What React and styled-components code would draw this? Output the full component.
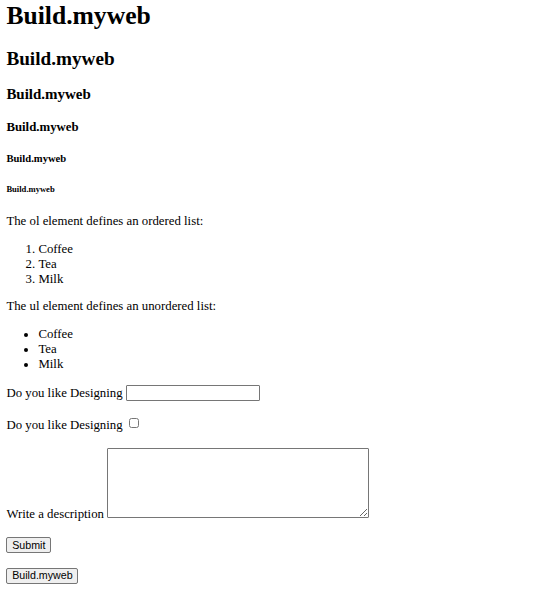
import React from "react";
import styled, { createGlobalStyle } from "styled-components";

const GlobalStyle = createGlobalStyle`
  body {
    margin: 0 6.4px 6.4px;
    padding-top: 1px;
    font-family: "Liberation Serif", "Times New Roman", serif;
    font-size: 12.8px;
    color: #000;
    background: #fff;
  }
`;

const H1 = styled.h1`
  font-size: 25.6px;
  margin: 0 0 0.67em;
`;

const H2 = styled.h2`
  font-size: 19.2px;
  margin: 0.83em 0;
`;

const H3 = styled.h3`
  font-size: 14.976px;
  margin: 1em 0;
`;

const H4 = styled.h4`
  font-size: 12.8px;
  margin: 1.33em 0;
`;

const H5 = styled.h5`
  font-size: 10.624px;
  margin: 1.67em 0;
`;

const H6 = styled.h6`
  font-size: 8.576px;
  margin: 2.33em 0;
`;

const Text = styled.p`
  margin: 12.8px 0;
`;

const OrderedList = styled.ol`
  margin: 12.8px 0;
  padding-left: 32px;
`;

const BulletList = styled.ul`
  margin: 12.8px 0;
  padding-left: 32px;
`;

const Form = styled.form`
  margin: 0;
`;

const Row = styled.div`
  margin-bottom: ${(p) => (p.$extra ? "15.72px" : "14.72px")};
`;

const TextInput = styled.input`
  box-sizing: border-box;
  width: 134px;
  height: 16px;
  padding: 0.8px 1.6px;
  border: 1px solid #767676;
  border-radius: 1px;
  font-family: "Liberation Sans", Arial, sans-serif;
  font-size: 10.67px;
  margin: 0;
`;

const Check = styled.input`
  width: 10.4px;
  height: 10.4px;
  margin: 2.4px 2.4px 2.4px 3.2px;
`;

const Area = styled.textarea`
  box-sizing: border-box;
  width: 262px;
  height: 70px;
  padding: 1.6px;
  border: 1px solid #767676;
  border-radius: 1px;
  font-family: "Liberation Mono", monospace;
  font-size: 10.67px;
  margin: 0;
`;

const Button = styled.button`
  font-family: "Liberation Sans", Arial, sans-serif;
  font-size: 10.67px;
  height: 16px;
  padding: 0 4.8px;
  margin: 0;
  background: #efefef;
  color: #000;
  border: 1px solid #767676;
  border-radius: 2px;
  line-height: 1;
`;

function App() {
  return (
    <>
      <GlobalStyle />
      <H1>Build.myweb</H1>
      <H2>Build.myweb</H2>
      <H3>Build.myweb</H3>
      <H4>Build.myweb</H4>
      <H5>Build.myweb</H5>
      <H6>Build.myweb</H6>

      <Text>The ol element defines an ordered list:</Text>
      <OrderedList>
        <li>Coffee</li>
        <li>Tea</li>
        <li>Milk</li>
      </OrderedList>

      <Text>The ul element defines an unordered list:</Text>
      <BulletList>
        <li>Coffee</li>
        <li>Tea</li>
        <li>Milk</li>
      </BulletList>

      <Form onSubmit={(e) => e.preventDefault()}>
        <Row>
          Do you like Designing <TextInput type="text" />
        </Row>
        <Row $extra>
          Do you like Designing <Check type="checkbox" />
        </Row>
        <Row>
          Write a description <Area />
        </Row>
        <Row>
          <Button type="submit">Submit</Button>
        </Row>
      </Form>
      <Button type="button">Build.myweb</Button>
    </>
  );
}

export default App;
